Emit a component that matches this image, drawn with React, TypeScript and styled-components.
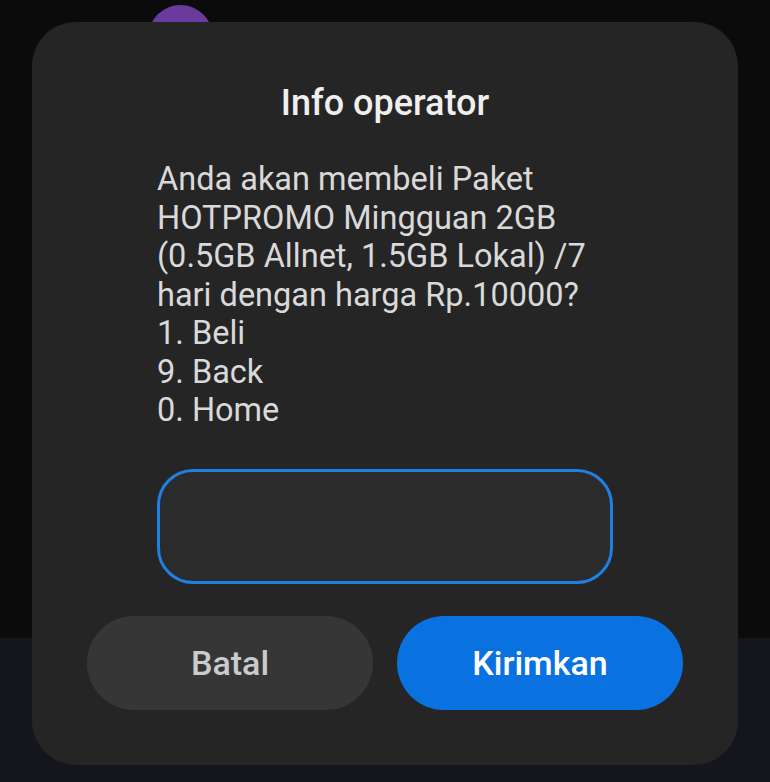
import React from "react";
import styled, { createGlobalStyle } from "styled-components";

const GlobalStyle = createGlobalStyle`
  html, body {
    margin: 0;
    padding: 0;
    background: #0b0b0b;
  }
  body {
    font-family: Roboto, "Noto Sans", "Liberation Sans", sans-serif;
  }
`;

const lines = [
  "Anda akan membeli Paket",
  "HOTPROMO Mingguan 2GB",
  "(0.5GB Allnet, 1.5GB Lokal) /7",
  "hari dengan harga Rp.10000?",
  "1. Beli",
  "9. Back",
  "0. Home",
];

export default function App() {
  return (
    <>
      <GlobalStyle />
      <SScreen>
        <STopArea>
          <SAvatar />
        </STopArea>
        <SBottomArea />
        <SDialog>
          <STitle>Info operator</STitle>
          <SMessage>
            {lines.map((l) => (
              <SLine key={l}>{l}</SLine>
            ))}
          </SMessage>
          <SInput type="text" aria-label="Balasan" />
          <SActions>
            <SButton>Batal</SButton>
            <SButton primary>Kirimkan</SButton>
          </SActions>
        </SDialog>
      </SScreen>
    </>
  );
}

const SScreen = styled.div`
  position: relative;
  width: 770px;
  height: 782px;
  overflow: hidden;
  display: flex;
  flex-direction: column;
`;

const STopArea = styled.div`
  height: 638px;
  background: #0b0b0b;
  padding: 5px 0 0 148px;
  box-sizing: border-box;
`;

const SAvatar = styled.div`
  width: 65px;
  height: 65px;
  border-radius: 50%;
  background: #6a3a9c;
`;

const SBottomArea = styled.div`
  flex: 1;
  background: #15151d;
`;

const SDialog = styled.div`
  position: absolute;
  left: 32px;
  top: 22px;
  width: 706px;
  height: 743px;
  box-sizing: border-box;
  background: #252525;
  border-radius: 44px;
  padding: 60px 55px 55px;
  display: flex;
  flex-direction: column;
  align-items: center;
`;

const STitle = styled.h1`
  margin: 0;
  font-size: 36px;
  line-height: 42px;
  font-weight: 500;
  color: #efefef;
`;

const SMessage = styled.div`
  align-self: stretch;
  margin: 36px 70px 0;
  color: #d9d9d9;
  font-size: 32.5px;
  line-height: 38.5px;
`;

const SLine = styled.div`
  white-space: nowrap;
`;

const SInput = styled.input`
  align-self: stretch;
  margin: 39px 70px 0;
  height: 115px;
  box-sizing: border-box;
  border: 3px solid #1f7fe2;
  border-radius: 36px;
  background: #2b2b2b;
  outline: none;
  color: #eee;
  font-size: 28px;
  padding: 0 24px;
`;

const SActions = styled.div`
  align-self: stretch;
  margin-top: 32px;
  display: grid;
  grid-template-columns: 1fr 1fr;
  gap: 24px;
`;

const SButton = styled.button<{ primary?: boolean }>`
  height: 94px;
  border: none;
  border-radius: 47px;
  background: ${(p) => (p.primary ? "#0a72e0" : "#363636")};
  color: ${(p) => (p.primary ? "#ffffff" : "#cbcbcb")};
  font-family: Roboto, "Noto Sans", sans-serif;
  font-size: 34px;
  font-weight: 500;
  cursor: pointer;
`;
